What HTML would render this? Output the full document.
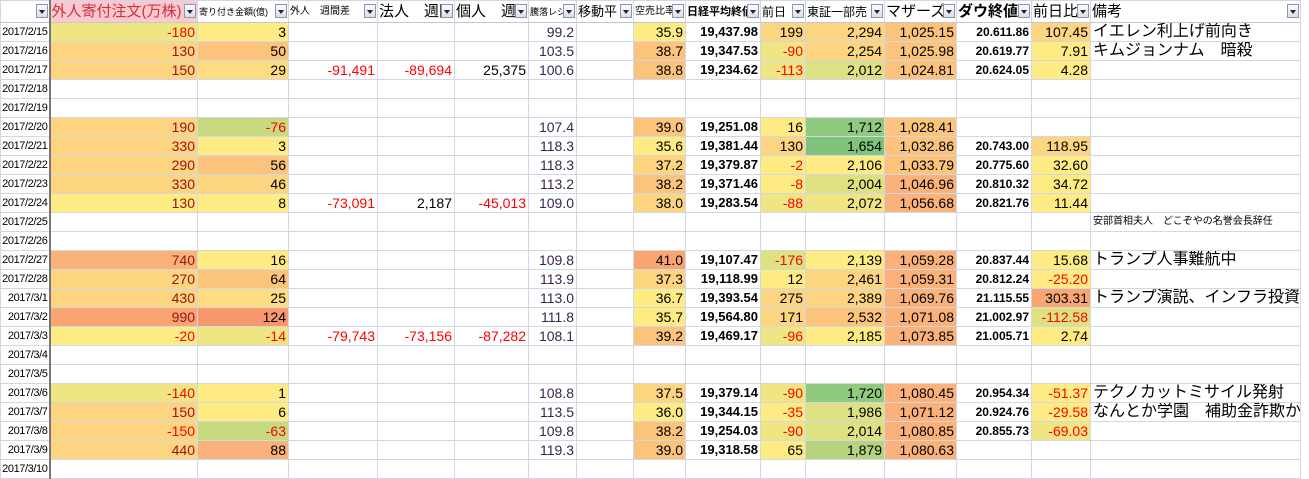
<!DOCTYPE html><html><head><meta charset="utf-8"><style>
body{margin:0;background:#fff;width:1309px;height:469px;overflow:hidden}
table{border-collapse:collapse;table-layout:fixed;width:1300px;font-family:"Liberation Sans","Noto Sans CJK JP",sans-serif;font-size:14px;color:#000}
td{border:1px solid #d0d7e5;height:18px;padding:0 2px;text-align:right;white-space:nowrap;overflow:hidden;line-height:18px}
td:first-child{font-size:11px;letter-spacing:-0.4px;border-right:2px solid #777;padding:0 1px 0 0}
tr.h td{height:21px;text-align:left;font-size:15px;position:relative;padding:0 1px;border-bottom:1px solid #c0c8d8}
tr.h td.s{font-size:9px}
.dd{position:absolute;right:1px;top:3px;width:12px;height:14px;border:1px solid #8a96ad;background:linear-gradient(#fafbfd,#d9dee8);box-sizing:border-box}
.dd:after{content:"";position:absolute;left:2px;top:5px;border-left:3.5px solid transparent;border-right:3.5px solid transparent;border-top:4px solid #223}
.r{color:#f00}.dr{color:#a0101a}.pu{color:#3a2450}
.b{font-weight:bold;font-size:13px}.b2{font-weight:bold;font-size:12px}
.n{text-align:left!important;font-size:16px}
.Y{background:#ffeb84}.Y2{background:#efe583}.G{background:#dde182}.Gc{background:#c8da80}.G2{background:#90ca7e}.G3{background:#80c47c}.Gb{background:#b6d47f}
.O1{background:#fdd480}.O1b{background:#fedc81}.O2{background:#fcc37c}.O3{background:#fab27a}.O4{background:#f9a571}.O5{background:#f8966e}
</style></head><body>
<table>
<colgroup><col style="width:49px"><col style="width:148px"><col style="width:91px"><col style="width:89px"><col style="width:77px"><col style="width:74px"><col style="width:48px"><col style="width:57px"><col style="width:52px"><col style="width:75px"><col style="width:45px"><col style="width:79px"><col style="width:72px"><col style="width:75px"><col style="width:59px"><col style="width:210px"></colgroup>
<tr class="h"><td><i class="dd"></i></td><td style="background:#fac8cf;color:#d03040">外人寄付注文(万株)<i class="dd"></i></td><td class="s">寄り付き金額(億)<i class="dd"></i></td><td class="s" style="font-size:10px">外人　週間差<i class="dd"></i></td><td>法人　週間<i class="dd"></i></td><td>個人　週<i class="dd"></i></td><td class="s">騰落レシオ<i class="dd"></i></td><td style="font-size:13px">移動平<i class="dd"></i></td><td class="s" style="font-size:10px">空売比率<i class="dd"></i></td><td class="s" style="font-size:11px;font-weight:bold">日経平均終値<i class="dd"></i></td><td style="font-size:12px">前日<i class="dd"></i></td><td style="font-size:12px">東証一部売<i class="dd"></i></td><td>マザーズ<i class="dd"></i></td><td style="font-weight:bold">ダウ終値<i class="dd"></i></td><td>前日比<i class="dd"></i></td><td>備考<i class="dd"></i></td></tr>
<tr><td>2017/2/15</td><td class="Y2 r">-180</td><td class="Y">3</td><td></td><td></td><td></td><td class="pu">99.2</td><td></td><td class="Y">35.9</td><td class="b">19,437.98</td><td class="O1">199</td><td class="O1">2,294</td><td class="O2">1,025.15</td><td class="b2">20.611.86</td><td class="O1">107.45</td><td class="n">イエレン利上げ前向き</td></tr>
<tr><td>2017/2/16</td><td class="O1 dr">130</td><td class="O2">50</td><td></td><td></td><td></td><td class="pu">103.5</td><td></td><td class="O2">38.7</td><td class="b">19,347.53</td><td class="Y2 r">-90</td><td class="O1">2,254</td><td class="O2">1,025.98</td><td class="b2">20.619.77</td><td class="Y">7.91</td><td class="n">キムジョンナム　暗殺</td></tr>
<tr><td>2017/2/17</td><td class="O1 dr">150</td><td class="O1b">29</td><td class="r">-91,491</td><td class="r">-89,694</td><td>25,375</td><td class="pu">100.6</td><td></td><td class="O2">38.8</td><td class="b">19,234.62</td><td class="Y2 r">-113</td><td class="G">2,012</td><td class="O2">1,024.81</td><td class="b2">20.624.05</td><td class="Y">4.28</td><td></td></tr>
<tr><td>2017/2/18</td><td></td><td></td><td></td><td></td><td></td><td></td><td></td><td></td><td></td><td></td><td></td><td></td><td></td><td></td><td></td></tr>
<tr><td>2017/2/19</td><td></td><td></td><td></td><td></td><td></td><td></td><td></td><td></td><td></td><td></td><td></td><td></td><td></td><td></td><td></td></tr>
<tr><td>2017/2/20</td><td class="O1 dr">190</td><td class="Gc r">-76</td><td></td><td></td><td></td><td class="pu">107.4</td><td></td><td class="O2">39.0</td><td class="b">19,251.08</td><td class="Y">16</td><td class="G2">1,712</td><td class="O2">1,028.41</td><td></td><td></td><td></td></tr>
<tr><td>2017/2/21</td><td class="O1 dr">330</td><td class="Y">3</td><td></td><td></td><td></td><td class="pu">118.3</td><td></td><td class="Y">35.6</td><td class="b">19,381.44</td><td class="O1">130</td><td class="G3">1,654</td><td class="O2">1,032.86</td><td class="b2">20.743.00</td><td class="O1">118.95</td><td></td></tr>
<tr><td>2017/2/22</td><td class="O1 dr">290</td><td class="O2">56</td><td></td><td></td><td></td><td class="pu">118.3</td><td></td><td class="O1">37.2</td><td class="b">19,379.87</td><td class="Y r">-2</td><td class="Y">2,106</td><td class="O2">1,033.79</td><td class="b2">20.775.60</td><td class="Y">32.60</td><td></td></tr>
<tr><td>2017/2/23</td><td class="O1 dr">330</td><td class="O1">46</td><td></td><td></td><td></td><td class="pu">113.2</td><td></td><td class="O2">38.2</td><td class="b">19,371.46</td><td class="Y r">-8</td><td class="G">2,004</td><td class="O3">1,046.96</td><td class="b2">20.810.32</td><td class="Y">34.72</td><td></td></tr>
<tr><td>2017/2/24</td><td class="Y dr">130</td><td class="Y">8</td><td class="r">-73,091</td><td>2,187</td><td class="r">-45,013</td><td class="pu">109.0</td><td></td><td class="O1">38.0</td><td class="b">19,283.54</td><td class="Y2 r">-88</td><td class="Y2">2,072</td><td class="O3">1,056.68</td><td class="b2">20.821.76</td><td class="Y">11.44</td><td></td></tr>
<tr><td>2017/2/25</td><td></td><td></td><td></td><td></td><td></td><td></td><td></td><td></td><td></td><td></td><td></td><td></td><td></td><td></td><td style="text-align:left;font-size:10px">安部首相夫人　どこぞやの名誉会長辞任</td></tr>
<tr><td>2017/2/26</td><td></td><td></td><td></td><td></td><td></td><td></td><td></td><td></td><td></td><td></td><td></td><td></td><td></td><td></td><td></td></tr>
<tr><td>2017/2/27</td><td class="O3 dr">740</td><td class="Y">16</td><td></td><td></td><td></td><td class="pu">109.8</td><td></td><td class="O4">41.0</td><td class="b">19,107.47</td><td class="G r">-176</td><td class="Y">2,139</td><td class="O3">1,059.28</td><td class="b2">20.837.44</td><td class="Y">15.68</td><td class="n">トランプ人事難航中</td></tr>
<tr><td>2017/2/28</td><td class="O1 dr">270</td><td class="O2">64</td><td></td><td></td><td></td><td class="pu">113.9</td><td></td><td class="O1">37.3</td><td class="b">19,118.99</td><td class="Y">12</td><td class="O1">2,461</td><td class="O3">1,059.31</td><td class="b2">20.812.24</td><td class="Y r">-25.20</td><td></td></tr>
<tr><td>2017/3/1</td><td class="O1 dr">430</td><td class="O1b">25</td><td></td><td></td><td></td><td class="pu">113.0</td><td></td><td class="Y">36.7</td><td class="b">19,393.54</td><td class="O1">275</td><td class="O1">2,389</td><td class="O3">1,069.76</td><td class="b2">21.115.55</td><td class="O4">303.31</td><td class="n">トランプ演説、インフラ投資</td></tr>
<tr><td>2017/3/2</td><td class="O4 dr">990</td><td class="O5">124</td><td></td><td></td><td></td><td class="pu">111.8</td><td></td><td class="Y">35.7</td><td class="b">19,564.80</td><td class="O1">171</td><td class="O2">2,532</td><td class="O3">1,071.08</td><td class="b2">21.002.97</td><td class="G r">-112.58</td><td></td></tr>
<tr><td>2017/3/3</td><td class="Y r">-20</td><td class="Y2 r">-14</td><td class="r">-79,743</td><td class="r">-73,156</td><td class="r">-87,282</td><td class="pu">108.1</td><td></td><td class="O2">39.2</td><td class="b">19,469.17</td><td class="Y2 r">-96</td><td class="Y">2,185</td><td class="O3">1,073.85</td><td class="b2">21.005.71</td><td class="Y">2.74</td><td></td></tr>
<tr><td>2017/3/4</td><td></td><td></td><td></td><td></td><td></td><td></td><td></td><td></td><td></td><td></td><td></td><td></td><td></td><td></td><td></td></tr>
<tr><td>2017/3/5</td><td></td><td></td><td></td><td></td><td></td><td></td><td></td><td></td><td></td><td></td><td></td><td></td><td></td><td></td><td></td></tr>
<tr><td>2017/3/6</td><td class="Y2 r">-140</td><td class="Y">1</td><td></td><td></td><td></td><td class="pu">108.8</td><td></td><td class="O1">37.5</td><td class="b">19,379.14</td><td class="Y2 r">-90</td><td class="G2">1,720</td><td class="O3">1,080.45</td><td class="b2">20.954.34</td><td class="Y r">-51.37</td><td class="n">テクノカットミサイル発射</td></tr>
<tr><td>2017/3/7</td><td class="O1 dr">150</td><td class="Y">6</td><td></td><td></td><td></td><td class="pu">113.5</td><td></td><td class="Y">36.0</td><td class="b">19,344.15</td><td class="Y r">-35</td><td class="G">1,986</td><td class="O3">1,071.12</td><td class="b2">20.924.76</td><td class="Y r">-29.58</td><td class="n">なんとか学園　補助金詐欺か</td></tr>
<tr><td>2017/3/8</td><td class="O1 r">-150</td><td class="Gc r">-63</td><td></td><td></td><td></td><td class="pu">109.8</td><td></td><td class="O2">38.2</td><td class="b">19,254.03</td><td class="Y2 r">-90</td><td class="G">2,014</td><td class="O3">1,080.85</td><td class="b2">20.855.73</td><td class="Y2 r">-69.03</td><td></td></tr>
<tr><td>2017/3/9</td><td class="O1 dr">440</td><td class="O3">88</td><td></td><td></td><td></td><td class="pu">119.3</td><td></td><td class="O2">39.0</td><td class="b">19,318.58</td><td class="Y">65</td><td class="Gb">1,879</td><td class="O3">1,080.63</td><td></td><td></td><td></td></tr>
<tr><td>2017/3/10</td><td></td><td></td><td></td><td></td><td></td><td></td><td></td><td></td><td></td><td></td><td></td><td></td><td></td><td></td><td></td></tr>
</table>
</body></html>
